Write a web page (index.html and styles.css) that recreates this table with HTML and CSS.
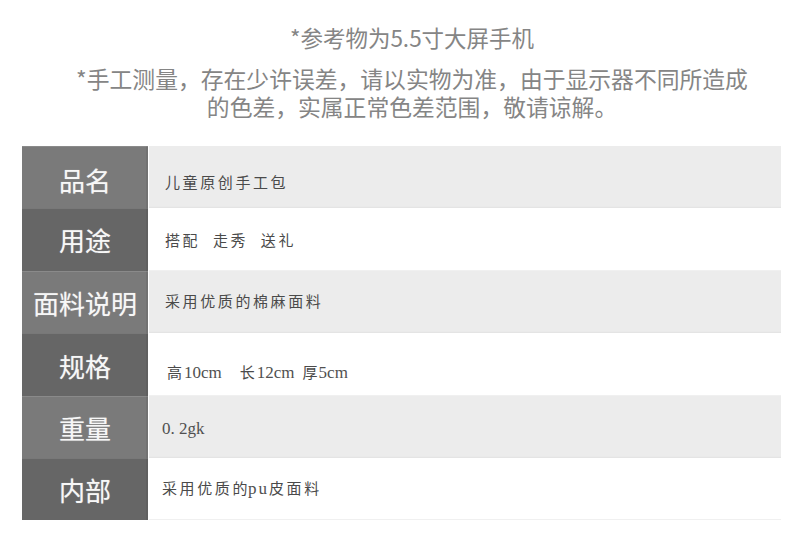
FILE: index.html
```html
<!DOCTYPE html>
<html lang="zh-CN">
<head>
<meta charset="utf-8">
<title>商品参数</title>
<link rel="stylesheet" href="styles.css">
</head>
<body>
<div class="page">
  <header class="notes">
    <p class="title">*参考物为5.5寸大屏手机</p>
    <p class="desc">*手工测量，存在少许误差，请以实物为准，由于显示器不同所造成<br>的色差，实属正常色差范围，敬请谅解。</p>
  </header>
  <div class="spec">
    <div class="row r1 odd"><div class="label">品名</div><div class="value"><span class="txt">儿童原创手工包</span></div></div>
    <div class="row r2 even"><div class="label">用途</div><div class="value"><span class="txt">搭配&nbsp;&nbsp;走秀&nbsp;&nbsp;送礼</span></div></div>
    <div class="row r3 odd"><div class="label">面料说明</div><div class="value"><span class="txt">采用优质的棉麻面料</span></div></div>
    <div class="row r4 even"><div class="label">规格</div><div class="value nosp"><span class="txt">高<span class="lat gap-l">10cm</span>长<span class="lat gap-s">12cm</span>厚<span class="lat last">5cm</span></span></div></div>
    <div class="row r5 odd"><div class="label">重量</div><div class="value"><span class="txt"><span class="lat">0. 2gk</span></span></div></div>
    <div class="row r6 even"><div class="label">内部</div><div class="value tight"><span class="txt">采用优质的<span class="lat pu">pu</span>皮面料</span></div></div>
  </div>
</div>
</body>
</html>
```
FILE: styles.css
```css
html, body {
  margin: 0;
  padding: 0;
  background: #ffffff;
}
.page {
  width: 800px;
  height: 542px;
  overflow: hidden;
}
.notes {
  text-align: center;
  color: #858585;
  font-family: "Noto Sans CJK SC", "Noto Sans", sans-serif;
  padding-top: 23px;
  padding-left: 24px;
}
.notes p {
  margin: 0;
}
.title {
  font-size: 22.5px;
  line-height: 28px;
}
.desc {
  margin-top: 14px !important;
  font-size: 22.8px;
  line-height: 28px;
}
.spec {
  margin: 25px 0 0 22px;
  width: 759px;
  display: flex;
  flex-direction: column;
}
.row {
  display: flex;
  height: 62px;
}
.r2, .r4 {
  height: 63px;
}
.label {
  width: 126px;
  flex: none;
  display: flex;
  align-items: center;
  justify-content: center;
  color: #f7f7f7;
  font-family: "Noto Sans CJK SC", "Noto Sans", sans-serif;
  font-size: 26px;
  font-weight: 400;
  text-shadow: 0 0 1px rgba(255,255,255,0.5);
  box-shadow: inset 0 1px 0 rgba(255,255,255,0.12), inset -2px 0 0 rgba(0,0,0,0.06);
}
.odd .label {
  background: #7a7a7a;
}
.even .label {
  background: #666666;
}
.value {
  flex: 1;
  margin-left: 1px;
  display: flex;
  align-items: center;
  padding-left: 16px;
  color: #4a4a4a;
  font-family: "Liberation Serif", "Noto Sans CJK SC", serif;
  font-size: 15px;
  letter-spacing: 2.6px;
}
.txt {
  white-space: pre;
  line-height: 20px;
}
.value.nosp {
  letter-spacing: 0;
  padding-left: 18px;
}
.lat {
  letter-spacing: 0;
  font-size: 17px;
  color: #505050;
  font-family: "Liberation Serif", serif;
}
.gap-l {
  margin: 0 18px 0 2px;
}
.gap-s {
  margin: 0 8px 0 2px;
}
.last {
  margin-left: 1px;
}
.pu {
  letter-spacing: 2px;
  margin-left: -2px;
}
.odd .value {
  background: #ececec;
  box-shadow: inset 0 -3px 2px -2px #e2e2e2;
}
.even .value {
  background: #ffffff;
  border-bottom: 1px solid #f0f0f0;
}
.r1 .value { padding-top: 12px; }
.r1 .label { padding-top: 5px; }
.r2 .value { padding-top: 4px; }
.r4 .value { padding-top: 18px; }
.r4 .label { padding-top: 2px; }
.r5 .value { padding-left: 13px; padding-top: 4px; }
.value.tight { padding-left: 13px; }
```
